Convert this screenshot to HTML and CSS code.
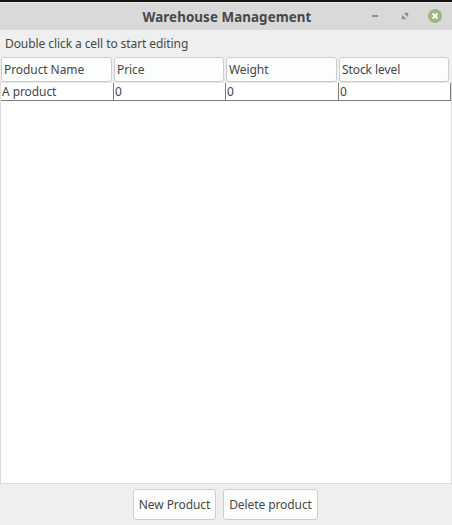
FILE: index.html
```html
<!DOCTYPE html>
<html lang="en">
<head>
<meta charset="utf-8">
<title>Warehouse Management</title>
<link rel="stylesheet" href="styles.css">
</head>
<body>
<div class="window">
  <header class="titlebar">
    <h1 class="title">Warehouse Management</h1>
    <div class="controls">
      <svg width="14" height="14" viewBox="0 0 14 14"><path d="M4 6h6v2H4z" fill="#8e8e8e"/></svg>
      <svg width="14" height="14" viewBox="0 0 14 14"><path d="M6 4h4v4zM4 6v4h4z" fill="#8a8a8a" stroke="#8a8a8a" stroke-width=".3"/></svg>
      <svg width="14" height="14" viewBox="0 0 14 14"><circle cx="7" cy="7" r="7" fill="#9ab87c"/><path d="M4.5 4.5l5 5M9.5 4.5l-5 5" stroke="#fff" stroke-width="1.8"/></svg>
    </div>
  </header>
  <p class="hint">Double click a cell to start editing</p>
  <div class="columns heads">
    <button class="head">Product Name</button>
    <button class="head">Price</button>
    <button class="head">Weight</button>
    <button class="head">Stock level</button>
  </div>
  <main class="sheet">
    <div class="columns row">
      <div class="cell">A product</div>
      <div class="cell">0</div>
      <div class="cell">0</div>
      <div class="cell">0</div>
    </div>
  </main>
  <footer class="actions">
    <button class="action new">New Product</button>
    <button class="action delete">Delete product</button>
  </footer>
</div>
</body>
</html>
```
FILE: styles.css
```css
* { box-sizing: border-box; }
body { margin: 0; }
.window {
  width: 452px;
  height: 525px;
  display: flex;
  flex-direction: column;
  overflow: hidden;
  background: #efefef;
  border-top: 2px solid #161313;
  color: #474747;
  font: 12px/17px "Noto Sans", sans-serif;
  letter-spacing: -0.08px;
}
.titlebar {
  height: 28px;
  display: grid;
  grid-template-columns: 1fr auto 1fr;
  align-items: center;
  padding: 0 10px 0 12px;
  background: #d9d9d9;
  border-top: 1px solid #eaeaea;
}
.title {
  grid-column: 2;
  margin: 0;
  font-size: 13.33px;
  line-height: 18px;
  font-weight: 700;
  letter-spacing: 0.1px;
  white-space: nowrap;
}
.controls {
  display: flex;
  justify-content: flex-end;
  gap: 16px;
  padding-bottom: 2px;
}
.hint {
  height: 27px;
  margin: 0;
  padding: 5px 5px 0;
}
.columns {
  display: grid;
  grid-template-columns: 113px 112px 113px 112px;
  padding-left: 1px;
}
.heads {
  height: 26px;
  border-bottom: 1px solid #e7e7e7;
}
.head, .action {
  font: inherit;
  letter-spacing: inherit;
  color: inherit;
  background: #fcfefd;
  border: 1px solid #cdcdcd;
  border-radius: 3px;
}
.head {
  height: 25px;
  margin-right: 2px;
  padding: 0 2px;
  text-align: left;
}
.sheet {
  height: 401px;
  background: #fff;
  border: 1px solid #dcdcdc;
  border-top: 0;
}
.row {
  height: 18px;
  padding: 0;
}
.cell {
  padding-left: 1px;
  border-right: 1px solid #7d7d7d;
  border-bottom: 1px solid #7d7d7d;
}
.actions {
  display: flex;
  justify-content: center;
  gap: 7px;
  padding: 5px 1px 0 0;
}
.action {
  height: 31px;
  padding: 0;
}
.new { width: 83px; }
.delete { width: 95px; }
```
